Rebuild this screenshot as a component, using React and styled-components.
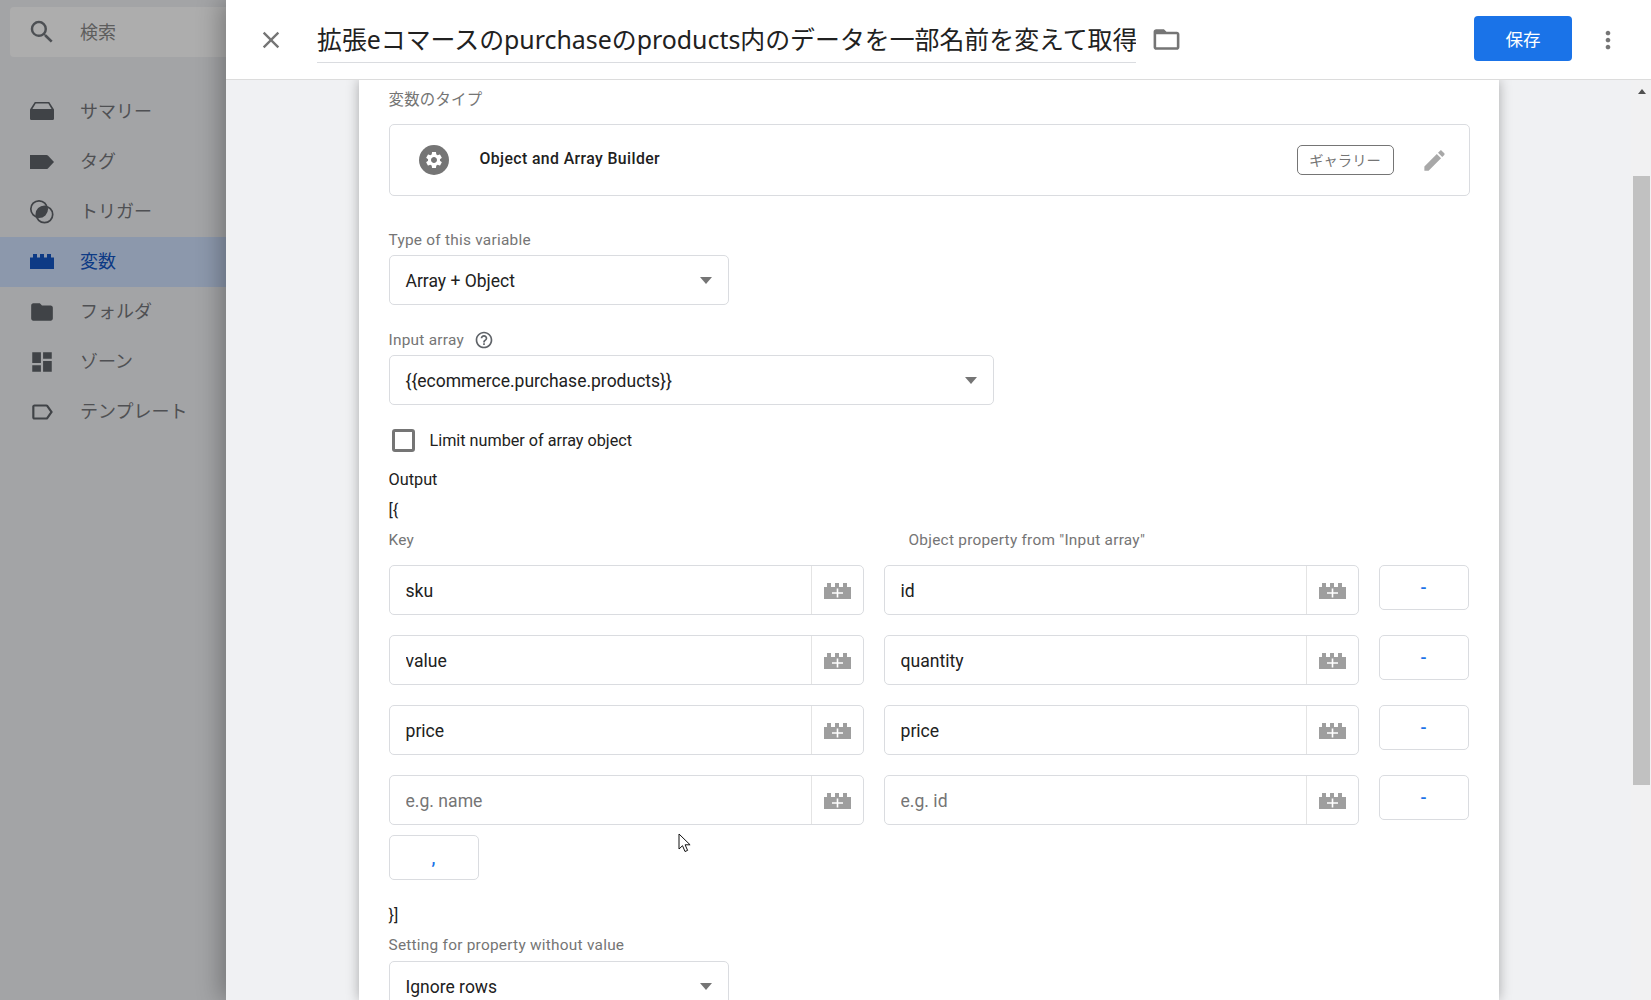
import React from "react";
import styled, { createGlobalStyle } from "styled-components";

const Global = createGlobalStyle`
  html, body { margin: 0; padding: 0; height: 100%; overflow: hidden; }
  body { font-family: Roboto, "Noto Sans CJK JP", sans-serif; color: #212121; }
  * { box-sizing: border-box; }
`;

const Page = styled.div`
  position: relative;
  display: grid;
  grid-template-columns: 226px 1fr;
  width: 1651px;
  height: 1000px;
  overflow: hidden;
`;

/* ---------- sidebar ---------- */
const Sidebar = styled.aside`
  background: #a3a4a6;
  padding-top: 7px;
`;
const SearchBox = styled.div`
  display: flex;
  align-items: center;
  height: 50px;
  margin-left: 10px;
  padding-left: 17px;
  background: #adadad;
  border-radius: 4px 0 0 4px;
  color: #5d5d5d;
  font-size: 18px;
  line-height: 47px;
  svg { width: 30px; height: 30px; fill: #4d5054; margin-right: 23px; }
`;
const Nav = styled.nav`
  margin-top: 30px;
`;
const NavItem = styled.div`
  display: flex;
  align-items: center;
  height: 50px;
  padding-left: 29px;
  font-size: 18px;
  color: ${p => (p.$active ? "#0d3a85" : "#4f5053")};
  background: ${p => (p.$active ? "#8c98ac" : "transparent")};
  span { margin-left: 25px; margin-top: -5px; }
`;
const NavIcon = styled.svg`
  width: 26px;
  height: 26px;
  flex: none;
  fill: ${p => (p.$active ? "#0d3a85" : "#404347")};
`;

/* ---------- main ---------- */
const Main = styled.main`
  position: relative;
  z-index: 1;
  display: flex;
  flex-direction: column;
  min-width: 0;
  height: 1000px;
  background: #f0f1f3;
  box-shadow: -6px 0 22px rgba(0, 0, 0, 0.28);
`;
const Header = styled.header`
  position: relative;
  z-index: 1;
  display: flex;
  align-items: center;
  flex: none;
  height: 80px;
  padding-left: 31px;
  background: #fff;
  border-bottom: 1px solid #dcdcdc;
`;
const HeaderIcon = styled.svg`
  width: 28px;
  height: 28px;
  flex: none;
  fill: #757575;
`;
const FolderIcon = styled.svg`
  width: 31px;
  height: 31px;
  flex: none;
  fill: #757575;
`;
const Title = styled.h1`
  width: 819px;
  height: 45px;
  margin: 2px 15px 0 32px;
  border-bottom: 1px solid #dadce0;
  color: #212121;
  font-family: "Noto Sans", "Noto Sans CJK JP", sans-serif;
  font-size: 24.9px;
  font-weight: 400;
  line-height: 42px;
  white-space: nowrap;
  overflow: hidden;
`;
const SaveButton = styled.button`
  width: 98px;
  height: 45px;
  margin: -2px 22px 0 auto;
  padding: 0;
  border: 0;
  border-radius: 4px;
  background: #1a73e8;
  color: #fff;
  font-family: Roboto, "Noto Sans CJK JP", sans-serif;
  font-size: 17.6px;
`;
const MoreIcon = styled(HeaderIcon)`
  margin-right: 29px;
`;
const Body = styled.div`
  display: flex;
  flex: 1;
  min-height: 0;
`;
const CardColumn = styled.div`
  flex: 1;
  display: flex;
  justify-content: center;
  min-width: 0;
`;
const Card = styled.section`
  width: 1140px;
  padding: 10px 29px 0 30px;
  background: #fff;
  box-shadow: 0 0 12px rgba(0, 0, 0, 0.3);
  overflow: hidden;
`;
const Label = styled.div`
  height: 20px;
  margin-top: ${p => p.$top || 0}px;
  margin-bottom: ${p => p.$bottom ?? 5}px;
  display: flex;
  align-items: center;
  color: #757575;
  font-size: 15.4px;
  letter-spacing: 0.25px;
  line-height: 20px;
  svg { width: 20px; height: 20px; margin-left: 10px; fill: #5f6368; }
`;
const TypeBox = styled.div`
  display: flex;
  align-items: center;
  height: 72px;
  margin-top: 14px;
  padding: 0 21px 0 29px;
  border: 1px solid #dadce0;
  border-radius: 5px;
`;
const GearBadge = styled.div`
  display: flex;
  align-items: center;
  justify-content: center;
  width: 30px;
  height: 30px;
  border-radius: 50%;
  background: #757575;
  svg { width: 20px; height: 20px; fill: #fff; }
`;
const TypeName = styled.div`
  margin: -4px 0 0 31px;
  color: #212121;
  font-size: 15.8px;
  font-weight: 500;
  letter-spacing: 0.4px;
`;
const Chip = styled.div`
  display: flex;
  align-items: center;
  justify-content: center;
  width: 97px;
  height: 30px;
  margin-left: auto;
  margin-right: 27px;
  padding-bottom: 2px;
  border: 1px solid #757575;
  border-radius: 5px;
  color: #757575;
  font-size: 14.3px;
`;
const EditIcon = styled.svg`
  width: 27px;
  height: 27px;
  fill: #a8a8a8;
`;
const Select = styled.div`
  display: flex;
  align-items: center;
  justify-content: space-between;
  width: ${p => p.$width}px;
  height: 50px;
  padding: 2px 16px 0 16px;
  border: 1px solid #dadce0;
  border-radius: 5px;
  font-size: 17.5px;
  color: #212121;
  &::after {
    content: "";
    margin-top: -2px;
    border-left: 6.500px solid transparent;
    border-right: 6.500px solid transparent;
    border-top: 7px solid #757575;
  }
`;
const CheckRow = styled.label`
  display: flex;
  align-items: center;
  height: 24px;
  margin-top: 23px;
  padding-left: 3px;
  font-size: 16.2px;
  color: #212121;
`;
const CheckBox = styled.span`
  width: 23px;
  height: 23px;
  margin-right: 15px;
  border: 3px solid #757575;
  border-radius: 3px;
`;
const Plain = styled.div`
  height: 20px;
  margin-top: ${p => p.$top}px;
  font-size: 16.3px;
  line-height: 20px;
  color: #212121;
`;
const RowGrid = styled.div`
  display: grid;
  grid-template-columns: 475px 475px 90px;
  column-gap: 20px;
  align-items: start;
  margin-top: ${p => p.$top}px;
`;
const ColumnHead = styled.div`
  height: 20px;
  padding-left: ${p => p.$indent || 0}px;
  color: #757575;
  font-size: 15.4px;
  letter-spacing: 0.25px;
  line-height: 20px;
`;
const InputGroup = styled.div`
  display: flex;
  height: 50px;
  border: 1px solid #dadce0;
  border-radius: 5px;
`;
const TextInput = styled.input`
  flex: 1;
  min-width: 0;
  padding: 2px 15px 0 16px;
  border: 0;
  outline: 0;
  background: transparent;
  color: #212121;
  font-family: Roboto, sans-serif;
  font-size: 17.6px;
  &::placeholder { color: #757575; opacity: 1; }
`;
const Addon = styled.div`
  display: flex;
  align-items: center;
  justify-content: center;
  flex: none;
  width: 52px;
  padding-top: 2px;
  border-left: 1px solid #e4e4e4;
  svg { width: 27px; height: 16px; }
`;
const GhostButton = styled.button`
  display: block;
  width: 90px;
  height: 45px;
  padding: 0;
  border: 1px solid #dadce0;
  border-radius: 5px;
  background: #fff;
  color: #1a73e8;
  font-family: Roboto, sans-serif;
  font-size: 17.6px;
  font-weight: 500;
  margin-top: ${p => p.$top || 0}px;
`;

/* ---------- scrollbar ---------- */
const ScrollTrack = styled.div`
  flex: none;
  width: 20px;
  padding: 9px 1px 0 2px;
  background: #f1f1f2;
`;
const ScrollArrow = styled.div`
  width: 0;
  height: 0;
  margin: 0 auto;
  border-left: 4.500px solid transparent;
  border-right: 4.500px solid transparent;
  border-bottom: 5px solid #505050;
`;
const ScrollThumb = styled.div`
  height: 609px;
  margin-top: 82px;
  background: #c1c1c1;
`;

const Cursor = styled.svg`
  position: absolute;
  left: 678px;
  top: 833px;
  width: 14px;
  height: 20px;
  z-index: 2;
`;

/* ---------- icons ---------- */
const BrickPlus = () => (
  <svg viewBox="0 0 27 16">
    <path fill="#9e9e9e" d="M0 4h3V0h4v4h4V0h4v4h4V0h4v4h4v12H0z" />
    <path fill="#fff" d="M12.700 5.500h1.600v3.700H19v1.600h-4.700v3.700h-1.600v-3.700H8V9.200h4.700z" />
  </svg>
);
const P = {
  search: "M15.500 14h-.79l-.28-.27A6.471 6.471 0 0 0 16 9.500 6.500 6.500 0 1 0 9.500 16c1.610 0 3.090-.59 4.230-1.570l.27.28v.79l5 4.990L20.490 19l-4.990-5zm-6 0C7.010 14 5 11.990 5 9.500S7.010 5 9.500 5 14 7.010 14 9.500 11.990 14 9.500 14z",
  folder: "M10 4H4c-1.100 0-1.990.9-1.990 2L2 18c0 1.100.9 2 2 2h16c1.100 0 2-.9 2-2V8c0-1.100-.9-2-2-2h-8l-2-2z",
  folderOutline: "M20 6h-8l-2-2H4c-1.100 0-1.990.9-1.990 2L2 18c0 1.100.9 2 2 2h16c1.100 0 2-.9 2-2V8c0-1.100-.9-2-2-2zm0 12H4V8h16v10z",
  dashboard: "M3 13h8V3H3v10zm0 8h8v-6H3v6zm10 0h8V11h-8v10zm0-18v6h8V3h-8z",
  labelOutline: "M17.630 5.840C17.270 5.330 16.670 5 16 5L5 5.010C3.900 5.010 3 5.900 3 7v10c0 1.100.9 1.990 2 1.990L16 19c.67 0 1.270-.33 1.630-.84L22 12l-4.370-6.160zM16 17H5V7h11l3.550 5L16 17z",
  close: "M19 6.410L17.590 5 12 10.590 6.410 5 5 6.410 10.590 12 5 17.590 6.410 19 12 13.410 17.590 19 19 17.590 13.410 12z",
  more: "M12 8c1.100 0 2-.9 2-2s-.9-2-2-2-2 .9-2 2 .9 2 2 2zm0 2c-1.100 0-2 .9-2 2s.9 2 2 2 2-.9 2-2-.9-2-2-2zm0 6c-1.100 0-2 .9-2 2s.9 2 2 2 2-.9 2-2-.9-2-2-2z",
  edit: "M3 17.250V21h3.750L17.810 9.940l-3.750-3.750L3 17.250zM20.710 7.040c.39-.39.39-1.020 0-1.410l-2.340-2.340c-.39-.39-1.020-.39-1.410 0l-1.830 1.830 3.750 3.750 1.830-1.830z",
  help: "M11 18h2v-2h-2v2zm1-16C6.480 2 2 6.480 2 12s4.480 10 10 10 10-4.480 10-10S17.520 2 12 2zm0 18c-4.410 0-8-3.590-8-8s3.590-8 8-8 8 3.590 8 8-3.590 8-8 8zm0-14c-2.210 0-4 1.790-4 4h2c0-1.100.9-2 2-2s2 .9 2 2c0 2-3 1.750-3 5h2c0-2.250 3-2.500 3-5 0-2.210-1.790-4-4-4z",
  gear: "M19.140 12.940c.04-.3.06-.61.06-.94 0-.32-.02-.64-.07-.94l2.030-1.580c.18-.14.23-.41.12-.61l-1.920-3.320c-.12-.22-.37-.29-.59-.22l-2.390.96c-.5-.38-1.030-.7-1.620-.94l-.36-2.540c-.04-.24-.24-.41-.48-.41h-3.840c-.24 0-.43.17-.47.41l-.36 2.540c-.59.24-1.130.57-1.620.94l-2.390-.96c-.22-.08-.47 0-.59.22L2.740 8.870c-.12.21-.08.47.12.61l2.030 1.580c-.05.3-.09.63-.09.94s.02.64.07.94l-2.030 1.580c-.18.14-.23.41-.12.61l1.920 3.320c.12.22.37.29.59.22l2.390-.96c.5.38 1.030.7 1.620.94l.36 2.540c.05.24.24.41.48.41h3.840c.24 0 .44-.17.47-.41l.36-2.540c.59-.24 1.130-.56 1.620-.94l2.390.96c.22.08.47 0 .59-.22l1.920-3.320c.12-.22.07-.47-.12-.61l-2.010-1.580zM12 15.600c-1.980 0-3.600-1.620-3.600-3.600s1.620-3.600 3.600-3.600 3.600 1.620 3.600 3.600-1.620 3.600-3.600 3.600z",
  summary: "M5.800 3h14.400L25 10.500v9c0 1-.8 1.500-1.600 1.500H2.600C1.800 21 1 20.500 1 19.500v-9zM6.700 4.500L3.400 10h19.200l-3.300-5.500z",
  tag: "M1 6h16.500c.6 0 1 .2 1.400.6L25 13l-6.100 6.400c-.4.4-.8.6-1.400.6H1z",
  lego: "M1 8.500h3V5h4v3.500h3V5h4v3.500h3V5h4v3.500h3V20H1z",
};

const NAV = [
  { text: "サマリー", d: P.summary, box: "0 0 26 26" },
  { text: "タグ", d: P.tag, box: "0 0 26 26" },
  { text: "トリガー", trigger: true },
  { text: "変数", d: P.lego, box: "0 0 26 26", active: true },
  { text: "フォルダ", d: P.folder, box: "0 0 24 24" },
  { text: "ゾーン", d: P.dashboard, box: "0 0 24 24" },
  { text: "テンプレート", d: P.labelOutline, box: "0 0 24 24" },
];

const ROWS = [
  { key: "sku", prop: "id" },
  { key: "value", prop: "quantity" },
  { key: "price", prop: "price" },
  { key: "", prop: "" },
];

const Row = ({ k, prop, top }) => (
  <RowGrid $top={top}>
    <InputGroup>
      <TextInput readOnly value={k} placeholder="e.g. name" />
      <Addon><BrickPlus /></Addon>
    </InputGroup>
    <InputGroup>
      <TextInput readOnly value={prop} placeholder="e.g. id" />
      <Addon><BrickPlus /></Addon>
    </InputGroup>
    <GhostButton>-</GhostButton>
  </RowGrid>
);

export default function App() {
  return (
    <Page>
      <Global />
      <Sidebar>
        <SearchBox>
          <svg viewBox="0 0 24 24"><path d={P.search} /></svg>
          検索
        </SearchBox>
        <Nav>
          {NAV.map(n => (
            <NavItem key={n.text} $active={n.active}>
              {n.trigger ? (
                <NavIcon viewBox="0 0 26 26">
                  <defs>
                    <clipPath id="trigger-clip"><circle cx="10" cy="10" r="8" /></clipPath>
                  </defs>
                  <circle cx="10" cy="10" r="8.200" fill="none" stroke="#404347" strokeWidth="1.700" />
                  <circle cx="15.500" cy="15.500" r="8.200" fill="none" stroke="#404347" strokeWidth="1.700" />
                  <circle cx="15.500" cy="15.500" r="8.200" clipPath="url(#trigger-clip)" />
                </NavIcon>
              ) : (
                <NavIcon viewBox={n.box} $active={n.active}><path d={n.d} /></NavIcon>
              )}
              <span>{n.text}</span>
            </NavItem>
          ))}
        </Nav>
      </Sidebar>

      <Main>
        <Header>
          <HeaderIcon viewBox="0 0 24 24"><path d={P.close} /></HeaderIcon>
          <Title>拡張eコマースのpurchaseのproducts内のデータを一部名前を変えて取得</Title>
          <FolderIcon viewBox="0 0 24 24"><path d={P.folderOutline} /></FolderIcon>
          <SaveButton>保存</SaveButton>
          <MoreIcon viewBox="0 0 24 24"><path d={P.more} /></MoreIcon>
        </Header>
        <Body>
          <CardColumn>
            <Card>
              <Label $bottom={0}>変数のタイプ</Label>
              <TypeBox>
                <GearBadge><svg viewBox="0 0 24 24"><path d={P.gear} /></svg></GearBadge>
                <TypeName>Object and Array Builder</TypeName>
                <Chip>ギャラリー</Chip>
                <EditIcon viewBox="0 0 24 24"><path d={P.edit} /></EditIcon>
              </TypeBox>

              <Label $top={34}>Type of this variable</Label>
              <Select $width={340}>Array + Object</Select>

              <Label $top={25}>
                Input array
                <svg viewBox="0 0 24 24"><path d={P.help} /></svg>
              </Label>
              <Select $width={605}>{"{{ecommerce.purchase.products}}"}</Select>

              <CheckRow>
                <CheckBox />
                Limit number of array object
              </CheckRow>

              <Plain $top={18}>Output</Plain>
              <Plain $top={11}>{"[{"}</Plain>

              <RowGrid $top={9}>
                <ColumnHead>Key</ColumnHead>
                <ColumnHead $indent={25}>Object property from "Input array"</ColumnHead>
              </RowGrid>

              {ROWS.map((r, i) => (
                <Row key={i} k={r.key} prop={r.prop} top={i === 0 ? 15 : 20} />
              ))}

              <GhostButton $top={10}>,</GhostButton>

              <Plain $top={26}>{"}]"}</Plain>
              <Label $top={9} $bottom={6}>Setting for property without value</Label>
              <Select $width={340}>Ignore rows</Select>
            </Card>
          </CardColumn>
          <ScrollTrack>
            <ScrollArrow />
            <ScrollThumb />
          </ScrollTrack>
        </Body>
      </Main>

      <Cursor viewBox="0 0 14 20">
        <path d="M1 1v15l3.500-3.300 2.500 5.800 2.600-1.100-2.500-5.600h5z" fill="#fff" stroke="#111" strokeWidth="1" />
      </Cursor>
    </Page>
  );
}
